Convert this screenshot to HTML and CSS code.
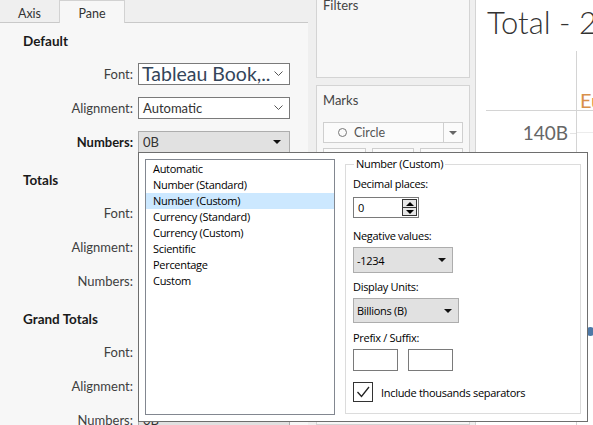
FILE: index.html
```html
<!DOCTYPE html>
<html lang="en">
<head>
<meta charset="utf-8">
<title>Format Pane</title>
<link rel="stylesheet" href="styles.css">
</head>
<body>
<div class="app">
  <aside class="format">
    <div class="tabs">
      <div class="tab">Axis</div>
      <div class="tab active">Pane</div>
    </div>

    <section class="sec sec-first">
      <h2>Default</h2>
      <div class="row">
        <label>Font:</label>
        <div class="sel sel-font"><span>Tableau Book,..</span><svg class="chev" width="9" height="6" viewBox="0 0 9 6"><polyline points="0.5,0.5 4.5,4.5 8.5,0.5" fill="none" stroke="#555" stroke-width="1"/></svg></div>
      </div>
      <div class="row">
        <label>Alignment:</label>
        <div class="sel"><span>Automatic</span><svg class="chev" width="9" height="6" viewBox="0 0 9 6"><polyline points="0.5,0.5 4.5,4.5 8.5,0.5" fill="none" stroke="#555" stroke-width="1"/></svg></div>
      </div>
      <div class="row">
        <label class="strong">Numbers:</label>
        <div class="sel sel-num"><span>0B</span><span class="tri"></span></div>
      </div>
    </section>

    <section class="sec">
      <h2>Totals</h2>
      <div class="row"><label>Font:</label><div class="sel"></div></div>
      <div class="row"><label>Alignment:</label><div class="sel"></div></div>
      <div class="row"><label>Numbers:</label><div class="sel sel-num"></div></div>
    </section>

    <section class="sec">
      <h2>Grand Totals</h2>
      <div class="row"><label>Font:</label><div class="sel"></div></div>
      <div class="row"><label>Alignment:</label><div class="sel"></div></div>
      <div class="row"><label>Numbers:</label><div class="sel sel-num"><span>0B</span><span class="tri"></span></div></div>
    </section>
  </aside>

  <div class="shelves">
    <div class="card filters"><div class="card-title">Filters</div></div>
    <div class="card marks">
      <div class="card-title">Marks</div>
      <div class="markdd">
        <span class="ring"></span><span class="markname">Circle</span>
        <span class="markarrow"><span class="tri tri-gray"></span></span>
      </div>
      <div class="markbtns">
        <div class="mb"></div><div class="mb"></div><div class="mb"></div>
      </div>
    </div>
  </div>

  <main class="view">
    <h1 class="title">Total - 2</h1>
    <div class="chart">
      <div class="corner"></div>
      <div class="colhead">Eu</div>
      <div class="rowhead"><span>140B</span><span class="tick"></span></div>
      <div class="plot"><span class="dot"></span></div>
    </div>
  </main>
</div>

<div class="popup">
  <ul class="list">
    <li>Automatic</li>
    <li>Number (Standard)</li>
    <li class="selected">Number (Custom)</li>
    <li>Currency (Standard)</li>
    <li>Currency (Custom)</li>
    <li>Scientific</li>
    <li>Percentage</li>
    <li>Custom</li>
  </ul>
  <div class="group">
    <div class="legend">Number (Custom)</div>
    <div class="lbl lbl-first">Decimal places:</div>
    <div class="spin">
      <span class="spin-val">0</span>
      <span class="spin-btns">
        <span class="sb"><span class="up"></span></span>
        <span class="sb"><span class="down"></span></span>
      </span>
    </div>
    <div class="lbl">Negative values:</div>
    <div class="dd dd-neg"><span>-1234</span><span class="tri"></span></div>
    <div class="lbl">Display Units:</div>
    <div class="dd dd-units"><span>Billions (B)</span><span class="tri"></span></div>
    <div class="lbl">Prefix / Suffix:</div>
    <div class="affix"><div class="tb"></div><div class="tb"></div></div>
    <div class="check">
      <span class="box"><svg width="18" height="18" viewBox="0 0 18 18"><polyline points="3.5,9 7.5,13.5 15,4" fill="none" stroke="#222" stroke-width="1.3"/></svg></span>
      <span>Include thousands separators</span>
    </div>
  </div>
</div>
</body>
</html>
```

FILE: styles.css
```css
* { box-sizing: border-box; margin: 0; padding: 0; }
html, body { width: 593px; height: 425px; overflow: hidden; }
body {
  font-family: Lato, "Open Sans", sans-serif;
  color: #333;
  background: #fff;
  position: relative;
}
.app { display: flex; height: 425px; }

/* ---------- format pane ---------- */
.format {
  width: 308px;
  flex: none;
  background: #f7f7f7;
  display: flex;
  flex-direction: column;
}
.tabs {
  height: 26px;
  display: flex;
  align-items: flex-end;
  background: #efefef;
  border-bottom: 1px solid #c9c9c9;
}
.tab {
  width: 59px;
  height: 22px;
  display: flex;
  align-items: flex-start;
  justify-content: center;
  padding-top: 6px;
  line-height: 16px;
  font-size: 12.5px;
  color: #333;
}
.tab.active {
  width: 66px;
  height: 23px;
  margin-bottom: -1px;
  background: #f7f7f7;
  border: 1px solid #d2d2d2;
  border-bottom: none;
  padding-top: 5px;
}
.sec { padding-top: 11px; }
.sec-first { padding-top: 8px; }
.sec h2 {
  font-size: 13.5px;
  font-weight: 700;
  height: 20px;
  line-height: 20px;
  padding-left: 23px;
  color: #1a1a1a;
  margin-bottom: 6px;
}
.row {
  height: 34px;
  display: grid;
  grid-template-columns: 133px 152px;
  column-gap: 5px;
  align-items: center;
}
.row label {
  text-align: right;
  font-size: 13px;
  color: #404040;
}
.row label.strong { font-weight: 700; color: #1a1a1a; }
.sel {
  height: 22px;
  border: 1px solid #7a7a7a;
  background: #fff;
  display: flex;
  align-items: center;
  justify-content: space-between;
  padding: 0 4px 0 4px;
  font-size: 13px;
  color: #333;
  overflow: hidden;
}
.sel-font span { font-size: 19.5px; line-height: 1; color: #34455a; margin-left: -1px; }
.sel-num { background: #e1e1e1; border-color: #adadad; }
.chev { margin-right: 2px; }
.tri {
  width: 0; height: 0;
  border-left: 4px solid transparent;
  border-right: 4px solid transparent;
  border-top: 4px solid #111;
  margin-right: 4px;
}
.tri-gray { border-top-color: #666; margin: 0; }

/* ---------- shelves ---------- */
.shelves {
  width: 168px;
  flex: none;
  background: #efefef;
  border-right: 1px solid #d4d4d4;
  padding: 0 5px 0 8px;
  display: flex;
  flex-direction: column;
  gap: 7px;
}
.card {
  background: #f7f7f7;
  border: 1px solid #d4d4d4;
  padding: 6px 6px 0 6px;
}
.filters { margin-top: -10px; height: 88px; }
.marks { flex: 1; }
.card-title { font-size: 13px; line-height: 16px; color: #444; }
.markdd {
  margin-top: 14px;
  height: 21px;
  border: 1px solid #cfcfcf;
  background: #fbfbfb;
  display: flex;
  align-items: center;
}
.ring {
  width: 9px; height: 9px;
  border: 1px solid #777;
  border-radius: 50%;
  margin-left: 14px;
}
.markname { font-size: 12.5px; color: #555; margin-left: 7px; flex: 1; }
.markarrow {
  width: 19px; height: 100%;
  border-left: 1px solid #cfcfcf;
  display: flex; align-items: center; justify-content: center;
}
.markbtns { display: flex; gap: 6px; margin-top: 5px; }
.mb { height: 30px; border: 1px solid #cfcfcf; background: #fbfbfb; flex: 1; }

/* ---------- view ---------- */
.view { flex: 1; background: #fff; overflow: hidden; }
.title {
  font-size: 31px;
  font-weight: 300;
  color: #333;
  line-height: 36px;
  padding: 4px 0 0 11px;
  white-space: nowrap;
  height: 51px;
}
.chart {
  display: grid;
  grid-template-columns: 90px 1fr;
  grid-template-rows: 60px 320px;
  margin-left: 10px;
}
.corner { border-bottom: 1px solid #d4d4d4; }
.colhead {
  border-left: 1px solid #d4d4d4;
  border-bottom: 1px solid #d4d4d4;
  font-size: 20px;
  line-height: 24px;
  color: #d9904a;
  padding: 37px 0 0 3px;
  white-space: nowrap;
}
.rowhead {
  display: flex;
  align-items: flex-start;
  justify-content: flex-end;
  font-size: 19px;
  line-height: 24px;
  color: #666;
  padding-top: 10px;
}
.tick { width: 6px; height: 1px; background: #e4e4e4; margin: 12px 0 0 2px; }
.plot {
  border-left: 1px solid #d4d4d4;
  position: relative;
  background: linear-gradient(#ececec, #ececec) 0 21px / 100% 1px no-repeat;
}
.dot {
  position: absolute;
  left: 9px;
  top: 216px;
  width: 9px; height: 9px;
  border-radius: 50%;
  background: #4e79a7;
}

/* ---------- popup ---------- */
.popup {
  position: absolute;
  left: 138px;
  top: 152px;
  width: 450px;
  height: 270px;
  background: #fff;
  border: 1px solid #6e6e6e;
  padding: 6px;
  display: flex;
  gap: 10px;
  font-family: "Open Sans", "Noto Sans", sans-serif;
  font-size: 11px;
  letter-spacing: -0.3px;
  color: #000;
}
.list {
  list-style: none;
  width: 190px;
  height: 256px;
  border: 1px solid #828790;
  padding-top: 1px;
}
.list li { height: 16px; line-height: 16px; padding-left: 7px; }
.list li.selected { background: #cce8ff; }
.group {
  margin-top: 5px;
  width: 236px;
  height: 250px;
  border: 1px solid #dcdcdc;
  padding: 0 0 0 7px;
  display: flex;
  flex-direction: column;
  align-items: flex-start;
}
.legend {
  margin: -9px 0 0 1px;
  padding: 0 2px;
  background: #fff;
  line-height: 16px;
}
.lbl { line-height: 16px; margin-top: 10px; }
.lbl-first { margin-top: 4px; }
.spin {
  margin-top: 5px;
  width: 66px;
  height: 21px;
  border: 1px solid #7a7a7a;
  display: flex;
  align-items: center;
  justify-content: space-between;
  padding: 0 1px 0 4px;
}
.spin-btns { display: flex; flex-direction: column; gap: 0; }
.sb {
  width: 15px; height: 9px;
  border: 1px solid #333;
  background: #e6e6e6;
  display: flex; align-items: center; justify-content: center;
}
.sb + .sb { border-top: none; height: 8px; }
.up { width: 0; height: 0; border-left: 4px solid transparent; border-right: 4px solid transparent; border-bottom: 4px solid #000; }
.down { width: 0; height: 0; border-left: 4px solid transparent; border-right: 4px solid transparent; border-top: 4px solid #000; }
.dd {
  margin-top: 3px;
  height: 26px;
  background: #e1e1e1;
  border: 1px solid #adadad;
  display: flex;
  align-items: center;
  justify-content: space-between;
  padding: 0 2px 0 3px;
}
.dd-neg { width: 100px; }
.dd-units { width: 106px; height: 25px; }
.dd + .lbl { margin-top: 6px; }
.dd-units + .lbl { margin-top: 7px; }
.affix { display: flex; gap: 10px; margin-top: 3px; }
.tb { width: 45px; height: 22px; border: 1px solid #7a7a7a; }
.check { display: flex; align-items: center; gap: 8px; margin-top: 11px; }
.box {
  width: 20px; height: 20px;
  border: 1px solid #333;
  display: flex; align-items: center; justify-content: center;
}
```
